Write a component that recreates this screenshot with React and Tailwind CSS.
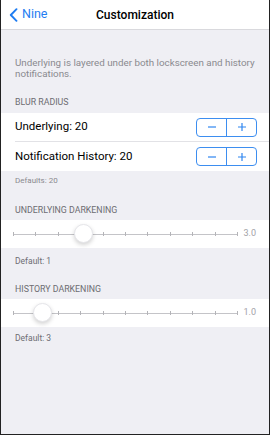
import React from "react";

const Stepper = () => (
  <div className="flex h-[19px] w-[61px] rounded-[4px] border border-[#3d8ef0] text-[#2f86f0]">
    <div className="flex flex-1 items-center justify-center border-r border-[#3d8ef0]">
      <svg width="10" height="10" viewBox="0 0 10 10">
        <path d="M1 5h8" stroke="currentColor" strokeWidth="1.2" />
      </svg>
    </div>
    <div className="flex flex-1 items-center justify-center">
      <svg width="10" height="10" viewBox="0 0 10 10">
        <path d="M1 5h8M5 1v8" stroke="currentColor" strokeWidth="1.2" />
      </svg>
    </div>
  </div>
);

const ticks = [0, 1, 2, 3, 4, 5, 6, 7, 8, 9, 10];

const Slider = ({ pos, value }) => (
  <div className="flex h-[28px] items-center bg-white pl-[12px] pr-[13px]">
    <div className="relative h-[10px] w-[225px]">
      <div className="absolute left-0 right-0 top-[4.5px] h-px bg-[#c4c4c8]" />
      {ticks.map((t) => (
        <div
          key={t}
          className="absolute top-[3px] h-[4px] w-px bg-[#b4b4b8]"
          style={{ left: t * 22.4 }}
        />
      ))}
      <div
        className="absolute top-[-5px] h-[19px] w-[19px] rounded-full border border-[#e6e6ea] bg-white shadow-[0_2px_4px_rgba(0,0,0,0.18)]"
        style={{ left: pos - 9.5 }}
      />
    </div>
    <span className="ml-auto text-[9px] text-[#a2a2a7]">{value}</span>
  </div>
);

const Header = ({ children, className }) => (
  <p className={`px-[14px] text-[8.8px] uppercase leading-[10px] text-[#6d6d72] ${className}`}>
    {children}
  </p>
);

export default function App() {
  return (
    <div
      className="flex h-[435px] w-[270px] flex-col border-x border-b border-[#222] bg-[#efeff4]"
      style={{ fontFamily: "Roboto, 'Liberation Sans', sans-serif" }}
    >
      <div className="grid h-[30px] grid-cols-[1fr_auto_1fr] items-center border-b border-[#d9d9dd] bg-white">
        <div className="flex items-center pl-[8px] text-[#1f7df2]">
          <svg width="9" height="14" viewBox="0 0 9 14">
            <path d="M7.5 1.2L1.8 7l5.7 5.8" fill="none" stroke="currentColor" strokeWidth="1.9" strokeLinecap="round" strokeLinejoin="round" />
          </svg>
          <span className="ml-[4px] text-[12.5px]">Nine</span>
        </div>
        <div className="text-[12px] font-medium text-black">Customization</div>
        <div />
      </div>

      <p className="mt-[27px] px-[14px] text-[9.8px] leading-[11px] text-[#8a8a8f]">
        Underlying is layered under both lockscreen and history notifications.
      </p>

      <Header className="mt-[18px]">Blur Radius</Header>
      <div className="mt-[6px] bg-white">
        <div className="ml-[14px] flex h-[29px] items-center border-b border-[#e2e2e6] pr-[12px]">
          <span className="text-[11.5px] text-black">Underlying: 20</span>
          <div className="ml-auto">
            <Stepper />
          </div>
        </div>
        <div className="ml-[14px] flex h-[29px] items-center pr-[12px]">
          <span className="text-[11.5px] text-black">Notification History: 20</span>
          <div className="ml-auto">
            <Stepper />
          </div>
        </div>
      </div>
      <p className="mt-[5px] px-[14px] text-[8px] leading-[10px] text-[#8a8a8f]">Defaults: 20</p>

      <Header className="mt-[19px]">Underlying Darkening</Header>
      <div className="mt-[5px]">
        <Slider pos={70} value="3.0" />
      </div>
      <p className="mt-[8px] px-[14px] text-[8.5px] leading-[10px] text-[#6d6d72]">Default: 1</p>

      <Header className="mt-[18px]">History Darkening</Header>
      <div className="mt-[5px]">
        <Slider pos={29} value="1.0" />
      </div>
      <p className="mt-[6px] px-[14px] text-[8.5px] leading-[10px] text-[#6d6d72]">Default: 3</p>
    </div>
  );
}
